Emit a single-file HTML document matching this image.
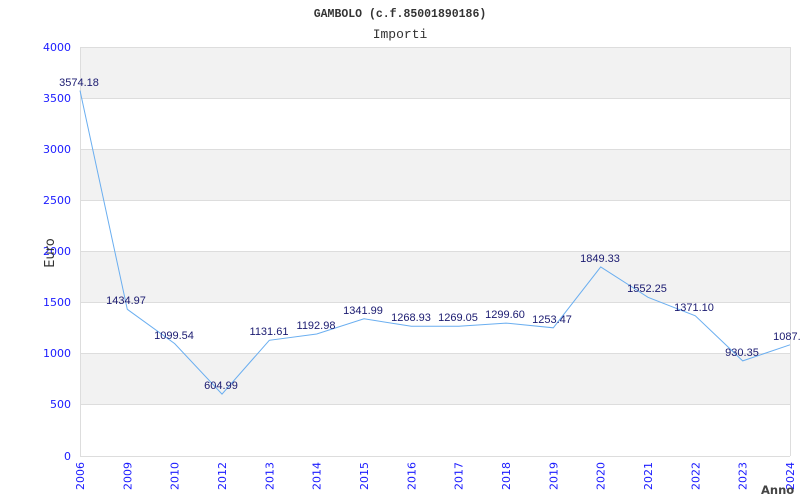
<!DOCTYPE html>
<html><head><meta charset="utf-8"><style>
html,body{margin:0;padding:0;background:#fff;width:800px;height:500px;overflow:hidden}
</style></head><body>
<svg width="800" height="500" xmlns="http://www.w3.org/2000/svg">
<rect x="0" y="0" width="800" height="500" fill="#fff"/>
<text x="400" y="17" text-anchor="middle" font-family="'Liberation Mono',monospace" font-weight="bold" font-size="11.5" fill="#333">GAMBOLO (c.f.85001890186)</text>
<text x="400" y="38" text-anchor="middle" font-family="'Liberation Mono',monospace" font-size="13" fill="#333">Importi</text>
<g fill="#f2f2f2">
<rect x="80" y="47" width="710" height="51.1"/>
<rect x="80" y="149.2" width="710" height="51.1"/>
<rect x="80" y="251.5" width="710" height="51.1"/>
<rect x="80" y="353.8" width="710" height="51.1"/>
</g>
<g stroke="#ddd" stroke-width="1">
<line x1="80" y1="47.5" x2="790" y2="47.5"/>
<line x1="80" y1="98.5" x2="790" y2="98.5"/>
<line x1="80" y1="149.5" x2="790" y2="149.5"/>
<line x1="80" y1="200.5" x2="790" y2="200.5"/>
<line x1="80" y1="251.5" x2="790" y2="251.5"/>
<line x1="80" y1="302.5" x2="790" y2="302.5"/>
<line x1="80" y1="353.5" x2="790" y2="353.5"/>
<line x1="80" y1="404.5" x2="790" y2="404.5"/>
<line x1="80" y1="456.5" x2="790" y2="456.5"/>
<line x1="80.5" y1="47" x2="80.5" y2="456"/>
<line x1="790.5" y1="47" x2="790.5" y2="456"/>
</g>
<g font-family="'DejaVu Sans',sans-serif" font-size="11" fill="#1a1aff" text-anchor="end">
<text x="71" y="51">4000</text>
<text x="71" y="102">3500</text>
<text x="71" y="153">3000</text>
<text x="71" y="204">2500</text>
<text x="71" y="255">2000</text>
<text x="71" y="306">1500</text>
<text x="71" y="357">1000</text>
<text x="71" y="408">500</text>
<text x="71" y="460">0</text>
</g>
<g font-family="'DejaVu Sans',sans-serif" font-size="11" fill="#1a1aff" text-anchor="end">
<text transform="translate(84,462) rotate(-90)">2006</text>
<text transform="translate(131.3,462) rotate(-90)">2009</text>
<text transform="translate(178.7,462) rotate(-90)">2010</text>
<text transform="translate(226,462) rotate(-90)">2012</text>
<text transform="translate(273.3,462) rotate(-90)">2013</text>
<text transform="translate(320.7,462) rotate(-90)">2014</text>
<text transform="translate(368,462) rotate(-90)">2015</text>
<text transform="translate(415.3,462) rotate(-90)">2016</text>
<text transform="translate(462.7,462) rotate(-90)">2017</text>
<text transform="translate(510,462) rotate(-90)">2018</text>
<text transform="translate(557.3,462) rotate(-90)">2019</text>
<text transform="translate(604.7,462) rotate(-90)">2020</text>
<text transform="translate(652,462) rotate(-90)">2021</text>
<text transform="translate(699.3,462) rotate(-90)">2022</text>
<text transform="translate(746.7,462) rotate(-90)">2023</text>
<text transform="translate(794,462) rotate(-90)">2024</text>
</g>
<text transform="translate(54,253) rotate(-90)" text-anchor="middle" font-family="'DejaVu Sans',sans-serif" font-size="13" fill="#333">Euro</text>
<text x="761" y="494" font-family="'DejaVu Sans',sans-serif" font-size="11.5" font-weight="bold" fill="#444">Anno</text>
<polyline fill="none" stroke="#6aaef0" stroke-width="1" points="80,90.5 127.3,309.3 174.7,343.6 222,394.1 269.3,340.3 316.7,334 364,318.8 411.3,326.3 458.7,326.2 506,323.1 553.3,327.8 600.7,266.9 648,297.3 695.3,315.8 742.7,360.9 790,344.8"/>
<g font-family="'Liberation Sans',sans-serif" font-size="11" fill="#1a1a70" text-anchor="middle">
<text x="79" y="86">3574.18</text>
<text x="126" y="304">1434.97</text>
<text x="174" y="339">1099.54</text>
<text x="221" y="389">604.99</text>
<text x="269" y="335">1131.61</text>
<text x="316" y="329">1192.98</text>
<text x="363" y="314">1341.99</text>
<text x="411" y="321">1268.93</text>
<text x="458" y="321">1269.05</text>
<text x="505" y="318">1299.60</text>
<text x="552" y="323">1253.47</text>
<text x="600" y="262">1849.33</text>
<text x="647" y="292">1552.25</text>
<text x="694" y="311">1371.10</text>
<text x="742" y="356">930.35</text>
<text x="790" y="340">1087.8</text>
</g>
</svg>
</body></html>
